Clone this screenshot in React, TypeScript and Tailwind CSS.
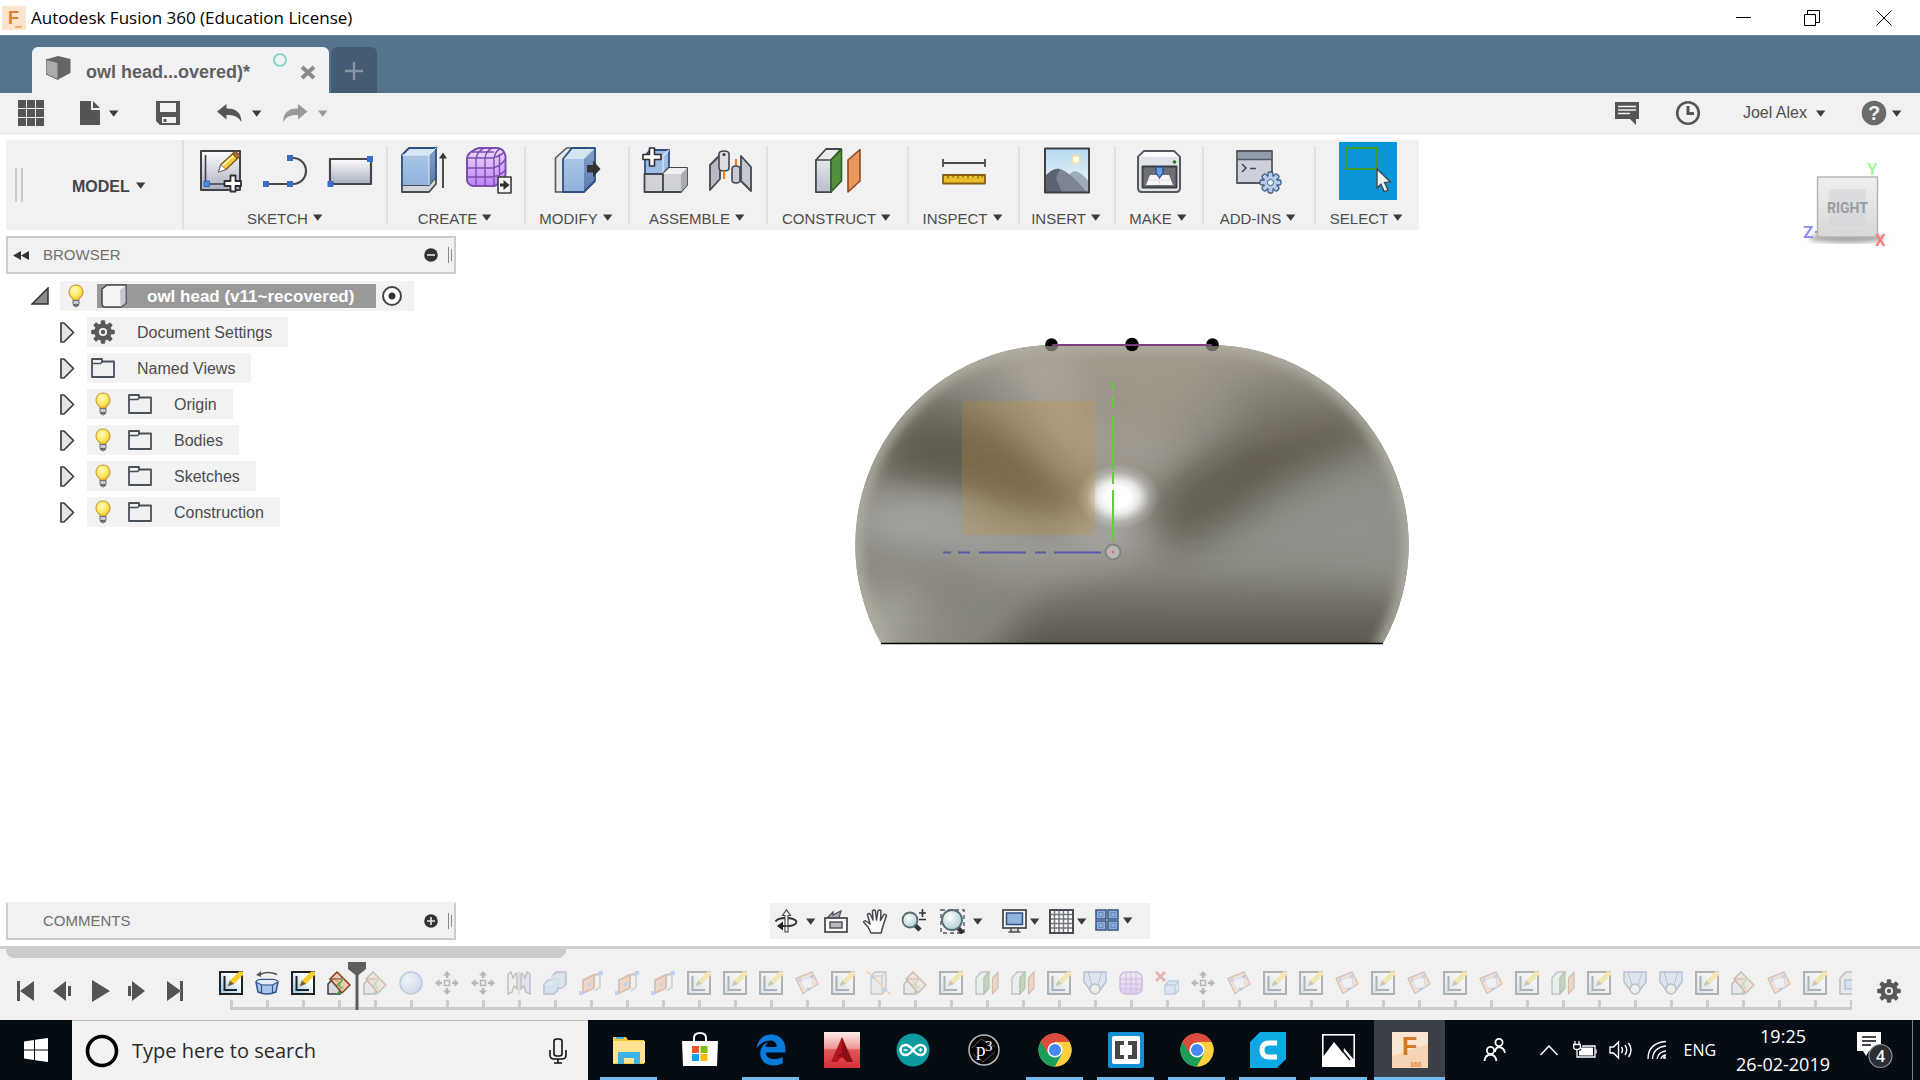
import { Fragment, useState } from 'react'
import type { ReactNode } from 'react'
import { FaEdgeLegacy } from 'react-icons/fa'

const UI_FONT = "font-['Liberation_Sans',Arial,sans-serif]"
const SYSTEM_FONT = "font-['Open_Sans','Noto_Sans',sans-serif]"

function Caret({ className = 'text-[#3c3c3c]' }: { className?: string }) {
  return (
    <svg width="10" height="7" viewBox="0 0 10 7" className={`shrink-0 ${className}`} aria-hidden="true">
      <path d="M0 0.5h9.4L4.7 6.8z" fill="currentColor" />
    </svg>
  )
}

/* ---------- shared icon parts ---------- */

function Gradients() {
  return (
    <svg width="0" height="0" className="absolute" aria-hidden="true">
      <defs>
        <linearGradient id="paper" x1="0" y1="0" x2="0" y2="1">
          <stop offset="0" stopColor="#fdfdfe" />
          <stop offset="1" stopColor="#a9afc0" />
        </linearGradient>
        <linearGradient id="steel" x1="0" y1="0" x2="0" y2="1">
          <stop offset="0" stopColor="#e4e6ea" />
          <stop offset="1" stopColor="#b9bdca" />
        </linearGradient>
        <linearGradient id="blueFace" x1="0" y1="0" x2="0" y2="1">
          <stop offset="0" stopColor="#a9c6e6" />
          <stop offset="1" stopColor="#8fb1dc" />
        </linearGradient>
        <linearGradient id="blueSide" x1="0" y1="0" x2="0" y2="1">
          <stop offset="0" stopColor="#85a5cd" />
          <stop offset="1" stopColor="#5579ab" />
        </linearGradient>
        <linearGradient id="purple" x1="0" y1="0" x2="0" y2="1">
          <stop offset="0" stopColor="#eadcf8" />
          <stop offset="1" stopColor="#bf82fa" />
        </linearGradient>
        <linearGradient id="sky" x1="0" y1="0" x2="0" y2="1">
          <stop offset="0" stopColor="#b5daf0" />
          <stop offset="1" stopColor="#f3f9fb" />
        </linearGradient>
        <linearGradient id="sketchFill" x1="1" y1="0" x2="0" y2="1">
          <stop offset="0.3" stopColor="#ffffff" />
          <stop offset="1" stopColor="#8fc6f0" />
        </linearGradient>
        <radialGradient id="ball" cx="0.38" cy="0.35" r="0.7">
          <stop offset="0" stopColor="#f4f9ff" />
          <stop offset="1" stopColor="#7ea6d8" />
        </radialGradient>
        <radialGradient id="lens" cx="0.4" cy="0.35" r="0.7">
          <stop offset="0" stopColor="#ffffff" />
          <stop offset="1" stopColor="#a9cdd2" />
        </radialGradient>
        <radialGradient id="bulb" cx="0.4" cy="0.35" r="0.7">
          <stop offset="0" stopColor="#fffbc0" />
          <stop offset="0.6" stopColor="#fbe95a" />
          <stop offset="1" stopColor="#e6b93a" />
        </radialGradient>
      </defs>
    </svg>
  )
}

function ToolIcon({ children }: { children: ReactNode }) {
  return (
    <svg width="48" height="48" viewBox="0 0 48 48" fill="none" strokeLinejoin="round" aria-hidden="true">
      {children}
    </svg>
  )
}

const GEAR_TEETH = [0, 45, 90, 135, 180, 225, 270, 315]

function Gear({ size = 24 }: { size?: number }) {
  return (
    <svg width={size} height={size} viewBox="0 0 24 24" aria-hidden="true">
      {GEAR_TEETH.map(a => (
        <rect key={a} x="9.8" y="0.2" width="4.4" height="6" rx="1" fill="#595959" transform={`rotate(${a} 12 12)`} />
      ))}
      <circle cx="12" cy="12" r="6.4" fill="none" stroke="#595959" strokeWidth="4.6" />
      <circle cx="12" cy="12" r="2.2" fill="#595959" />
    </svg>
  )
}

/* ---------- ribbon icons ---------- */

const icons = {
  sketch: (
    <ToolIcon>
      <rect x="4" y="4" width="39" height="39" fill="url(#paper)" stroke="#3f4146" strokeWidth="2" />
      <path d="M8.500 8v29H36" stroke="#3f4146" strokeWidth="1.6" />
      <rect x="7" y="34" width="5.500" height="5.500" fill="#4a90e0" stroke="#2a62b8" />
      <path d="M21.500 25l2.500-7.500L38 4.500l5 4.500-14 13.500z" fill="#f5c63a" stroke="#7b5a14" strokeWidth="1.300" />
      <path d="M24.500 19.500L38 7.500" stroke="#fff0a8" strokeWidth="1.800" />
      <path d="M35.500 7l3-2.800 4.800 4.300-3 3z" fill="#b06a3a" stroke="#6a3d1c" />
      <path d="M21.500 25l2.500-7.300 5 4.800z" fill="#fff" stroke="#777" />
      <path d="M33.500 28.500h5v5.500h5.500v5h-5.500v5.500h-5V39h-6v-5h6z" fill="#fff" stroke="#2f2f2f" strokeWidth="1.800" />
    </ToolIcon>
  ),
  line: (
    <ToolIcon>
      <path d="M4 37h27a13 13 0 0 0 0-26" stroke="#4b4b4b" strokeWidth="2.200" />
      <rect x="1" y="34" width="6" height="6" fill="#3a6cc8" />
      <rect x="25" y="34" width="6" height="6" fill="#3a6cc8" />
      <rect x="25" y="8" width="6" height="6" fill="#3a6cc8" />
    </ToolIcon>
  ),
  rect: (
    <ToolIcon>
      <rect x="3" y="12" width="41" height="25" fill="url(#paper)" stroke="#45474c" strokeWidth="2.200" />
      <rect x="0.500" y="34" width="6" height="6" fill="#3a6cc8" />
      <rect x="40" y="9" width="6" height="6" fill="#3a6cc8" />
    </ToolIcon>
  ),
  extrude: (
    <ToolIcon>
      <path d="M2 38h27l7-8v7l-7 8H2z" fill="#d2d5dc" stroke="#4a4d55" strokeWidth="1.800" />
      <path d="M2 8l7-7h27l-7 7z" fill="#d3e4f2" />
      <path d="M29 8l7-7v29l-7 8z" fill="url(#blueSide)" />
      <path d="M2 8h27v30H2z" fill="url(#blueFace)" />
      <path d="M2 38V8l7-7h27v30" stroke="#2f4f80" strokeWidth="1.800" />
      <path d="M29 8v30M2 8h27l7-7" stroke="#e6f0f8" strokeWidth="1" />
      <path d="M43 41V9" stroke="#3a3a3a" strokeWidth="1.800" />
      <path d="M43 5.500l4 6h-8z" fill="#3a3a3a" />
    </ToolIcon>
  ),
  form: (
    <ToolIcon>
      <path d="M2 12q0-4 4-7t8-4h19q6 1 7.500 8v18q-1 6-4 8t-7 4H8q-6-1-6-7z" fill="url(#purple)" stroke="#7d4db0" strokeWidth="2" />
      <path d="M2 21h26q8-2 12.500-9M2 30h26q8-2 12.500-7M3 11h24q9-2 12-6M7 5h22M11 39V11q2-7 8-10M20 39V11q1-7 7-10M29 39V12q1-8 6-10M34.500 36V7" stroke="#7d4db0" strokeWidth="1.400" />
      <rect x="33" y="30" width="13" height="16" fill="#f4f4f4" stroke="#3b3b3b" strokeWidth="1.600" />
      <path d="M35 36.500h3.500V33l6 5-6 5v-3.500H35z" fill="#2f2f2f" />
    </ToolIcon>
  ),
  modify: (
    <ToolIcon>
      <path d="M2.500 11l11-10h9l-11 10v34h-9z" fill="#e6e8eb" stroke="#55585e" strokeWidth="1.600" />
      <path d="M10 12L19 1h23L31 12z" fill="#d3e4f2" />
      <path d="M31 12L42 1v34L31 45z" fill="url(#blueSide)" />
      <path d="M10 12h21v33H10z" fill="url(#blueFace)" />
      <path d="M10 45V12L19 1h23v33L31 45z" stroke="#2f4f80" strokeWidth="1.800" />
      <path d="M34 18h6v-4.500L47.500 22 40 30v-4.500h-6z" fill="#333" />
    </ToolIcon>
  ),
  component: (
    <ToolIcon>
      <path d="M3 9l5-6h19v17l-6 7H3z" fill="#9dbde4" stroke="#2f4f80" strokeWidth="1.800" />
      <path d="M21 27V9l6-6" stroke="#dbe8f5" strokeWidth="1.200" />
      <path d="M2.500 27H21v18H2.500z" fill="#d0d2d8" stroke="#44474d" strokeWidth="1.800" />
      <path d="M21 27l6-6h18v17l-6 7H21z" fill="#d0d2d8" stroke="#44474d" strokeWidth="1.800" />
      <path d="M39 27l6-6v17l-6 7z" fill="#a8acb7" />
      <path d="M21 27l6-6h18l-6 6z" fill="#eceef0" />
      <path d="M7.500 1h5v6.500H19v5h-6.500V19h-5v-6.500H1v-5h6.500z" fill="#fff" stroke="#2f2f2f" strokeWidth="1.600" />
    </ToolIcon>
  ),
  joint: (
    <ToolIcon>
      <path d="M3 18L13 8v24L3 43z" fill="#b7bac4" stroke="#44474d" strokeWidth="1.800" />
      <path d="M12 7q0-3 5-3t5 3v14q0 3-5 3t-5-3z" fill="#dcdee3" stroke="#44474d" strokeWidth="1.600" />
      <circle cx="17" cy="7.500" r="1.600" fill="#3b3b3b" />
      <path d="M17 24v8M29 12v10" stroke="#f58220" strokeWidth="2.200" />
      <path d="M34 9l10 11v24L34 34z" fill="#c5c8d1" stroke="#44474d" strokeWidth="1.800" />
      <path d="M25 22q0-3 4-3t4 3v11q0 3-4 3t-4-3z" fill="#c9ccd4" stroke="#44474d" strokeWidth="1.600" />
    </ToolIcon>
  ),
  construct: (
    <ToolIcon>
      <path d="M2 13L12 2h15L17 13v32H2z" fill="#ececee" stroke="#44474d" strokeWidth="1.800" />
      <path d="M2 13h15v32H2z" fill="url(#steel)" stroke="#44474d" strokeWidth="1.600" />
      <path d="M17 13L27.500 2.500V34L17 45z" fill="#559040" stroke="#2f6320" strokeWidth="1.600" />
      <path d="M34 13L46 2.500V34L34 45z" fill="#eb985e" stroke="#8f4a24" strokeWidth="1.600" />
    </ToolIcon>
  ),
  inspect: (
    <ToolIcon>
      <path d="M3 12v8M45 12v8M3 16h42" stroke="#4b4b4b" strokeWidth="1.800" />
      <rect x="3" y="28" width="42" height="8.500" fill="#ecc02c" stroke="#8a5c14" strokeWidth="1.800" />
      <path d="M8 28.500v3M13 28.500v2M18 28.500v3M23 28.500v2M28 28.500v3M33 28.500v2M38 28.500v3M42 28.500v2" stroke="#6b4a10" />
    </ToolIcon>
  ),
  insert: (
    <ToolIcon>
      <rect x="2" y="1.500" width="44" height="44" fill="url(#sky)" />
      <circle cx="33" cy="12.500" r="4" fill="#fffef0" stroke="#f7dfa0" strokeWidth="2" />
      <path d="M24 30q6-8 11-5 6 3 11 10v11H30z" fill="#9eabb9" />
      <path d="M2 29q9-9 15-7 10 3 27 23.500H2z" fill="#7d8494" />
      <path d="M2 29q9-9 15-7l-4 9 6 14.500H2z" fill="#5d6373" />
      <rect x="2" y="1.500" width="44" height="44" stroke="#3d3f45" strokeWidth="2" />
    </ToolIcon>
  ),
  make: (
    <ToolIcon>
      <path d="M3 10l6-6h30l6 6v31q0 4-4 4H7q-4 0-4-4z" fill="#dfe2e6" stroke="#55585f" strokeWidth="2" />
      <path d="M4 10l5.500-5h29l5.500 5z" fill="#fafafa" />
      <circle cx="39.500" cy="15" r="1.800" fill="#1c7c1c" />
      <rect x="7.500" y="19.500" width="34" height="21" fill="#6c6f77" stroke="#3a3c42" strokeWidth="1.800" />
      <path d="M11 38l4-10h19l4 10z" fill="#f6f6f6" />
      <path d="M14 33h21M24.500 30v8" stroke="#d5d7da" strokeWidth="0.800" />
      <path d="M21 20h7v6l-3.500 5-3.500-5z" fill="#6ba0dc" stroke="#1f4f8c" strokeWidth="1.300" />
    </ToolIcon>
  ),
  addins: (
    <ToolIcon>
      <rect x="2" y="4" width="35" height="32" fill="#ccd0da" stroke="#55585f" strokeWidth="1.800" />
      <rect x="3" y="5" width="33" height="7" fill="#929cab" />
      <path d="M2 12.500h35" stroke="#55585f" strokeWidth="1.600" />
      <path d="M7 17l4 4-4 4M15 21.500h6" stroke="#45484f" strokeWidth="1.600" />
      {GEAR_TEETH.map(a => (
        <rect key={a} x="33" y="25" width="5" height="6" rx="1.500" fill="#b5cdea" stroke="#3d5a86" strokeWidth="1.300" transform={`rotate(${a} 35.500 35.500)`} />
      ))}
      <circle cx="35.500" cy="35.500" r="6.500" fill="#b5cdea" />
      <circle cx="35.500" cy="35.500" r="3" fill="#fff" stroke="#3d5a86" />
    </ToolIcon>
  ),
  select: (
    <svg width="58" height="58" viewBox="0 0 58 58" fill="none" className="bg-[#0a96d9]" aria-hidden="true">
      <rect x="7" y="6" width="31" height="21" stroke="#3f9a2c" strokeWidth="2" />
      <path d="M38 27l13.500 13-6 .6 3.600 7.400-3.800 1.800-3.400-7.600L38 46z" fill="#eef0f4" stroke="#44484f" strokeWidth="1.400" />
    </svg>
  ),
}

type Group = { label: string; width: string; tools: { name: string; icon: ReactNode }[] }

const GROUPS: Group[] = [
  {
    label: 'SKETCH',
    width: 'w-[202px]',
    tools: [
      { name: 'Create Sketch', icon: icons.sketch },
      { name: 'Line', icon: icons.line },
      { name: 'Rectangle', icon: icons.rect },
    ],
  },
  {
    label: 'CREATE',
    width: 'w-[138px]',
    tools: [
      { name: 'Extrude', icon: icons.extrude },
      { name: 'Create Form', icon: icons.form },
    ],
  },
  { label: 'MODIFY', width: 'w-[104px]', tools: [{ name: 'Press Pull', icon: icons.modify }] },
  {
    label: 'ASSEMBLE',
    width: 'w-[138px]',
    tools: [
      { name: 'New Component', icon: icons.component },
      { name: 'Joint', icon: icons.joint },
    ],
  },
  { label: 'CONSTRUCT', width: 'w-[141px]', tools: [{ name: 'Offset Plane', icon: icons.construct }] },
  { label: 'INSPECT', width: 'w-[111px]', tools: [{ name: 'Measure', icon: icons.inspect }] },
  { label: 'INSERT', width: 'w-[96px]', tools: [{ name: 'Canvas', icon: icons.insert }] },
  { label: 'MAKE', width: 'w-[88px]', tools: [{ name: '3D Print', icon: icons.make }] },
  { label: 'ADD-INS', width: 'w-[112px]', tools: [{ name: 'Scripts', icon: icons.addins }] },
  { label: 'SELECT', width: 'w-[105px]', tools: [{ name: 'Select', icon: icons.select }] },
]

/* ---------- top bars ---------- */

function TitleBar() {
  return (
    <header className={`flex h-[35px] items-center bg-white pl-[2px] text-black ${SYSTEM_FONT}`}>
      <svg width="24" height="24" viewBox="0 0 24 24" aria-hidden="true">
        <rect width="24" height="24" fill="#fbe3cd" />
        <text x="6" y="18" fontSize="18" fontWeight="700" fill="#d9812e" fontFamily="Liberation Sans">F</text>
        <rect x="13" y="20" width="7" height="2" fill="#f0b070" />
      </svg>
      <h1 className="ml-[5px] pt-px text-[17px] leading-6">Autodesk Fusion 360 (Education License)</h1>
      <div className="ml-auto flex">
        <button aria-label="Minimize" className="grid h-[35px] w-[68px] place-items-center">
          <svg width="15" height="15" viewBox="0 0 15 15"><path d="M0 7.500h15" stroke="#000" /></svg>
        </button>
        <button aria-label="Restore" className="grid h-[35px] w-[70px] place-items-center">
          <svg width="16" height="16" viewBox="0 0 16 16" fill="none" stroke="#000">
            <path d="M.5 4.500h11v11H.5zM3.500 4V.5h12v12H12" />
          </svg>
        </button>
        <button aria-label="Close" className="grid h-[35px] w-[73px] place-items-center">
          <svg width="16" height="16" viewBox="0 0 16 16" stroke="#000"><path d="M.5.5l15 15M15.500.5l-15 15" /></svg>
        </button>
      </div>
    </header>
  )
}

function TabBar() {
  return (
    <nav className="flex h-[58px] items-end gap-[2px] border-t border-t-[#6b859c] bg-[#56738e] pl-8">
      <div className="flex h-[46px] w-[297px] items-center rounded-t-md bg-[#f2f2f5] pl-[14px]">
        <svg width="25" height="24" viewBox="0 0 25 24" className="-mt-1" aria-hidden="true">
          <path d="M0 3.500L12 0l12.500 3v14L12 23.500 0 18z" fill="#666" />
          <path d="M0 3.500l12 3v17L0 18z" fill="#a9acad" stroke="#666" />
        </svg>
        <a href="#document" className="ml-[15px] pt-1 text-[18px] font-bold text-[#606060]">owl head...overed)*</a>
        <svg width="16" height="16" viewBox="0 0 16 16" className="mb-5 ml-auto" aria-hidden="true">
          <circle cx="8" cy="8" r="6" fill="none" stroke="#8fd6c4" strokeWidth="2.200" />
        </svg>
        <button aria-label="Close tab" className="mr-[13px] ml-3 pt-1">
          <svg width="16" height="15" viewBox="0 0 16 15"><path d="M2 2l12 11M14 2L2 13" stroke="#8b8b8b" strokeWidth="4" /></svg>
        </button>
      </div>
      <button aria-label="New tab" className="grid h-[46px] w-[46px] place-items-center rounded-t-md bg-[#455b72] pt-[2px]">
        <svg width="18" height="18" viewBox="0 0 18 18"><path d="M9 0v18M0 9h18" stroke="#8595a5" strokeWidth="2.400" /></svg>
      </button>
    </nav>
  )
}

function QuickBar() {
  return (
    <div className="flex h-[41px] items-center border-b border-[#e8e8e8] bg-[#f1f1f1] pr-[18px] pl-[18px] text-[#555]">
      <button aria-label="Data panel">
        <svg width="26" height="26" viewBox="0 0 26 26" fill="currentColor">
          {[0, 9, 18].map(y => [0, 9, 18].map(x => <rect key={`${x}-${y}`} x={x} y={y} width="8" height="8" />))}
        </svg>
      </button>
      <button aria-label="File" className="ml-9 flex items-center gap-[9px]">
        <svg width="20" height="24" viewBox="0 0 20 24" fill="currentColor"><path d="M0 0h11v9h9v15H0z" /><path d="M13 0l7 7h-7z" /></svg>
        <Caret />
      </button>
      <button aria-label="Save" className="ml-9">
        <svg width="26" height="24" viewBox="0 0 26 24">
          <path d="M1 0h24v24H5l-4-4z" fill="currentColor" />
          <path d="M5 2h16v9H5zM7 16h14v6H7z" fill="#f1f1f1" />
          <rect x="8.500" y="18" width="3" height="3" fill="currentColor" />
        </svg>
      </button>
      <button aria-label="Undo" className="ml-9 flex items-center gap-[10px]">
        <svg width="25" height="18" viewBox="0 0 25 18"><path d="M0 7.500L9.500 0v4.500Q24 4 24.500 18 20 10 9.500 11v4.500z" fill="currentColor" /></svg>
        <Caret />
      </button>
      <button aria-label="Redo" className="ml-[21px] flex items-center gap-[10px] text-[#999]" disabled>
        <svg width="25" height="18" viewBox="0 0 25 18"><path d="M24.500 7.500L15 0v4.500Q.5 4 0 18 4.500 10 15 11v4.500z" fill="currentColor" /></svg>
        <Caret className="text-[#999]" />
      </button>
      <div className="ml-auto flex items-center">
        <button aria-label="Comments">
          <svg width="24" height="23" viewBox="0 0 24 23"><path d="M0 0h24v17h-3v6l-6-6H0z" fill="currentColor" /><path d="M3 4.500h18M3 8h18M3 11.500h12" stroke="#f1f1f1" strokeWidth="1.500" /></svg>
        </button>
        <button aria-label="Job status" className="ml-9">
          <svg width="26" height="26" viewBox="0 0 26 26" fill="none"><circle cx="13" cy="13" r="10.800" stroke="currentColor" strokeWidth="2.600" /><path d="M13 6v7.500h6" stroke="currentColor" strokeWidth="3" /></svg>
        </button>
        <button className="ml-[42px] flex items-center gap-[9px] text-[16px] text-[#4e4e4e]">
          Joel Alex
          <Caret />
        </button>
        <button aria-label="Help" className="ml-[35px] flex items-center gap-[5px]">
          <svg width="26" height="26" viewBox="0 0 26 26">
            <circle cx="13" cy="13" r="12.300" fill="#6b6b6b" />
            <text x="13" y="20" textAnchor="middle" fontSize="20" fontWeight="700" fill="#f1f1f1" fontFamily="Liberation Sans">?</text>
          </svg>
          <Caret />
        </button>
      </div>
    </div>
  )
}

function Ribbon() {
  return (
    <div className="relative mt-[6px] ml-[6px] flex h-[90px] w-fit bg-[#f1f1f1]" role="toolbar" aria-label="Model tools">
      <div className="flex w-[178px] items-center border-r-2 border-[#e0e0e0] pl-[9px]">
        <span className="h-[34px] w-2 border-x-2 border-[#c9c9c9]" />
        <button className="ml-[49px] flex items-center gap-[6px] pt-1 text-[16px] font-bold text-[#444]">
          MODEL
          <Caret className="mb-[3px] text-[#3c3c3c]" />
        </button>
      </div>
      {GROUPS.map((g, i) => (
        <Fragment key={g.label}>
          {i > 0 && <span className="-mr-[2px] my-[6px] w-[2px] bg-[#e0e0e0]" />}
          <div className={`flex flex-col items-center pt-[3px] ${g.width}`}>
            <div className="flex h-[58px] items-center gap-[17px] pb-[2px] pl-[2px]">
              {g.tools.map(t => (
                <button key={t.name} aria-label={t.name}>{t.icon}</button>
              ))}
            </div>
            <button className="mt-2 flex items-center gap-[5px] text-[15px] leading-5 whitespace-nowrap text-[#4c4c4c]">
              {g.label}
              <Caret className="mb-[3px] text-[#3c3c3c]" />
            </button>
          </div>
        </Fragment>
      ))}
    </div>
  )
}

/* ---------- browser tree ---------- */

type PanelBarProps = { title: string; open: boolean; onToggle: () => void; docked?: boolean }

function PanelBar({ title, open, onToggle, docked }: PanelBarProps) {
  return (
    <div className={`flex h-[38px] w-[450px] items-center border-2 border-[#cccccc] bg-[#f1f1f1] pr-[2px] pl-[5px] ${docked ? 'border-t-[#f1f1f1]' : ''}`}>
      <span className="w-[30px]">
        {!docked && (
          <svg width="16" height="9" viewBox="0 0 16 9" aria-hidden="true"><path d="M8 0v9L0 4.500zM16 0v9L8 4.500z" fill="#333" /></svg>
        )}
      </span>
      <h2 className="text-[15px] text-[#707070]">{title}</h2>
      <button aria-label={`Toggle ${title}`} onClick={onToggle} className="ml-auto">
        <svg width="14" height="14" viewBox="0 0 14 14">
          <circle cx="7" cy="7" r="6.800" fill="#333" />
          <path d={open ? 'M3 7h8' : 'M3 7h8M7 3v8'} stroke="#e8e8e8" strokeWidth="1.600" />
        </svg>
      </button>
      <span className="ml-[10px] flex items-center gap-[2px]">
        <span className="h-4 w-px bg-[#888]" />
        <span className="h-3 w-px bg-[#888]" />
      </span>
    </div>
  )
}

function Bulb() {
  return (
    <svg width="16" height="24" viewBox="0 0 16 24" aria-hidden="true">
      <path d="M8 1a7 7 0 0 1 4.800 12Q11 14.500 11 16H5q0-1.500-1.800-3A7 7 0 0 1 8 1z" fill="url(#bulb)" stroke="#caa13a" strokeWidth="1.200" />
      <path d="M5 16.500h6v3.500q-1 3-3 3t-3-3z" fill="#c9ccd4" stroke="#6d7078" strokeWidth="1" />
      <path d="M5.500 21h5" stroke="#4b4d53" strokeWidth="1.500" />
    </svg>
  )
}

function Folder() {
  return (
    <svg width="24" height="20" viewBox="0 0 24 20" fill="none" aria-hidden="true">
      <path d="M1 1h10v2.500h12V19H1z" fill="#eff0f2" stroke="#4a505a" strokeWidth="1.800" strokeLinejoin="round" />
      <path d="M1 5.500h8.500L12 3.500" stroke="#4a505a" strokeWidth="1.600" />
    </svg>
  )
}

function Expander() {
  return (
    <svg width="15" height="21" viewBox="0 0 15 21" aria-hidden="true">
      <path d="M1 1h3l9.500 9.500L4 20H1z" fill="#e3e4e8" stroke="#3f3f3f" strokeWidth="1.700" strokeLinejoin="round" />
    </svg>
  )
}

const NODES = [
  { label: 'Document Settings', kind: 'settings' },
  { label: 'Named Views', kind: 'views' },
  { label: 'Origin', kind: 'folder' },
  { label: 'Bodies', kind: 'folder' },
  { label: 'Sketches', kind: 'folder' },
  { label: 'Construction', kind: 'folder' },
]

function BrowserTree() {
  return (
    <ul className="mt-[7px] flex flex-col gap-[6px] text-[16px] text-[#4c4c4c]">
      <li className="flex h-[30px] items-center pl-[31px]">
        <button aria-label="Collapse root" className="w-[29px]">
          <svg width="18" height="18" viewBox="0 0 18 18"><path d="M17 1v16H1z" fill="#8a8a8a" stroke="#333" strokeWidth="1.500" /></svg>
        </button>
        <div className="flex h-[30px] w-[354px] items-center bg-[#f2f2f2] pl-2">
          <button aria-label="Hide component"><Bulb /></button>
          <div className="ml-[13px] flex h-6 w-[279px] items-center bg-[#999] pl-1">
            <svg width="26" height="24" viewBox="0 0 26 24" aria-hidden="true">
              <path d="M1 5l5-4h19v18l-5 4H3l-2-2z" fill="#f4f4f5" stroke="#4a4a4a" strokeWidth="1.600" />
              <path d="M19 6l5.500-4.500V19L19.500 23z" fill="#c3c6cf" />
            </svg>
            <span className="ml-5 pt-px text-[17px] font-bold whitespace-nowrap text-white">owl head (v11~recovered)</span>
          </div>
          <input type="radio" name="active-component" aria-label="Activate component" defaultChecked className="ml-[6px] size-5 appearance-none rounded-full border-2 border-[#444] bg-[radial-gradient(circle,#333_0_3px,#fff_4px)]" />
        </div>
      </li>
      {NODES.map(n => (
        <li key={n.label} className="flex h-[30px] items-center pl-[60px]">
          <button aria-label={`Expand ${n.label}`} className="w-[27px]"><Expander /></button>
          <div className="flex h-[30px] items-center bg-[#f2f2f2] pr-4 pl-1">
            {n.kind === 'folder' && (
              <button aria-label={`Hide ${n.label}`} className="mr-[17px] pl-1"><Bulb /></button>
            )}
            {n.kind === 'settings' ? <Gear /> : <Folder />}
            <span className="ml-[22px] pt-px">{n.label}</span>
          </div>
        </li>
      ))}
    </ul>
  )
}

/* ---------- 3D viewport ---------- */

const BODY = 'M881 643A200 200 0 0 1 1057 345H1208A200 200 0 0 1 1383 643Z'
const RIM = 'M870 670L881 643A200 200 0 0 1 1057 345H1208A200 200 0 0 1 1383 643L1394 670'

function Canvas() {
  return (
    <svg viewBox="0 134 1920 812" className="absolute inset-0 h-full w-full" aria-label="Model view">
      <defs>
        <clipPath id="body"><path d={BODY} /></clipPath>
        <filter id="soft" x="-60%" y="-60%" width="220%" height="220%"><feGaussianBlur stdDeviation="21" /></filter>
        <filter id="mid" x="-60%" y="-60%" width="220%" height="220%"><feGaussianBlur stdDeviation="16" /></filter>
        <filter id="rim" x="-10%" y="-10%" width="120%" height="120%"><feGaussianBlur stdDeviation="6" /></filter>
        <radialGradient id="spot">
          <stop offset="0.3" stopColor="#fff" />
          <stop offset="0.5" stopColor="#fff" stopOpacity="0.800" />
          <stop offset="0.75" stopColor="#fff" stopOpacity="0.250" />
          <stop offset="1" stopColor="#fff" stopOpacity="0" />
        </radialGradient>
        <linearGradient id="floor" x1="0" y1="0" x2="0" y2="1">
          <stop offset="0" stopColor="#5a5750" stopOpacity="0" />
          <stop offset="0.45" stopColor="#57534c" stopOpacity="0.800" />
          <stop offset="1" stopColor="#4c4841" />
        </linearGradient>
      </defs>
      <g clipPath="url(#body)">
        <rect x="850" y="340" width="565" height="310" fill="#8b8880" />
        <g filter="url(#soft)">
          <ellipse cx="1130" cy="350" rx="190" ry="22" fill="#aaa496" />
          <path d="M985 350L1060 350 1110 480 1080 480z" fill="#aba59b" />
          <path d="M1080 350L1250 350 1150 480 1105 480z" fill="#9e978a" />
          <path d="M870 440L930 400 1000 430 1090 500 1060 520 980 500 880 480z" fill="#5f5b50" />
          <path d="M1340 400L1390 435 1290 480 1180 550 1150 510 1230 445z" fill="#5d584c" />
          <path d="M1250 365L1360 410 1240 440z" fill="#817c71" />
          <path d="M860 500L960 515 1100 545 1060 565 860 540z" fill="#a9a9a5" />
          <ellipse cx="910" cy="562" rx="70" ry="12" fill="#7c7972" />
          <path d="M1180 570L1320 480 1420 460 1420 590 1180 580z" fill="#8d9189" />
          <path d="M860 590L920 590 890 680 850 670z" fill="#a8a99f" />
          <path d="M920 600L1040 580 980 640z" fill="#84847d" />
        </g>
        <g filter="url(#mid)">
          <ellipse cx="930" cy="514" rx="50" ry="12" fill="#a5a5a1" />
          <ellipse cx="1105" cy="536" rx="42" ry="20" fill="#aaa9a5" />
          <ellipse cx="1140" cy="450" rx="34" ry="12" fill="#a19e99" />
          <ellipse cx="1205" cy="490" rx="34" ry="14" fill="#68635a" />
          <path d="M950 700L1040 600Q1140 560 1250 568T1430 600V700z" fill="url(#floor)" />
        </g>
        <path d={RIM} fill="none" stroke="#b3afa2" strokeWidth="12" filter="url(#rim)" />
        <ellipse cx="1118" cy="497" rx="42" ry="33" fill="url(#spot)" />
      </g>
      <rect x="962" y="401" width="133" height="134" fill="#c9952f" fillOpacity="0.230" />
      <path d="M881 643.500H1383" stroke="#000" strokeWidth="1.400" />
      <g fill="#000">
        <circle cx="1051.500" cy="344.500" r="6.300" />
        <circle cx="1132" cy="344.500" r="6.800" />
        <circle cx="1212.500" cy="344.500" r="6.300" />
      </g>
      <path d="M1045 346h13q-1 5-6.500 5t-6.500-5zM1206 346h13q-1 5-6.500 5t-6.500-5z" fill="#6b6860" />
      <path d="M1052 345H1212" stroke="#7a3f7c" strokeWidth="1.800" />
      <path d="M1113 381V541" stroke="#6fc548" strokeWidth="2" strokeDasharray="9 6 12 8 54 2 12 6 51 0" />
      <path d="M943 552.500H1101" stroke="#5c58a8" strokeWidth="2" strokeDasharray="8 7 12 9 47 9 11 8 60 0" />
      <circle cx="1113" cy="552" r="7.500" fill="#b9b7b3" stroke="#85837e" strokeWidth="2" />
      <circle cx="1113" cy="552" r="1.200" fill="#d66" />
    </svg>
  )
}

function ViewCube() {
  return (
    <div className="absolute top-[24px] right-[30px]">
      <svg width="90" height="92" viewBox="0 0 90 92" role="img" aria-label="View cube">
        <defs>
          <filter id="shade"><feGaussianBlur stdDeviation="2.500" /></filter>
          <linearGradient id="face" x1="0" y1="0" x2="0" y2="1">
            <stop offset="0" stopColor="#f0f0f0" />
            <stop offset="1" stopColor="#d8d8d8" />
          </linearGradient>
        </defs>
        <ellipse cx="47" cy="80" rx="38" ry="5" fill="#8d8d8d" opacity="0.800" filter="url(#shade)" />
        <g fontFamily="Roboto" fontWeight="600" fontSize="17">
          <text x="67" y="17" fill="#9cf79c">Y</text>
          <text x="3" y="80" fill="#8c8cff">Z</text>
          <rect x="17.500" y="19" width="60" height="60" fill="url(#face)" stroke="#b3b3b3" strokeWidth="1.400" />
          <rect x="29" y="31" width="37" height="37" fill="#d3d6da" opacity="0.600" />
          <text x="75" y="88" fill="#f77b7b">X</text>
          <path d="M15 74h2" stroke="#8c8cff" strokeWidth="2" />
        </g>
        <text x="47.500" y="55" textAnchor="middle" fontFamily="Roboto" fontWeight="700" fontSize="14" fill="#9a9da1">RIGHT</text>
      </svg>
    </div>
  )
}

function NavBar() {
  const s = '#4a4d53'
  return (
    <div className="flex h-9 w-[380px] items-center bg-[#f1f1f1] pl-1" role="toolbar" aria-label="Navigation">
      <button aria-label="Orbit" className="flex items-center gap-2">
        <svg width="24" height="24" viewBox="0 0 24 24" fill="none">
          <path d="M1.500 12.500q2-3.500 10.500-3.500t10.500 3.500q0 3.500-7 4.500H6" stroke="#333" strokeWidth="1.800" />
          <path d="M11 23V6.500H8.500L12.500.8l4 5.700H14V23z" fill="#fff" stroke={s} strokeWidth="1.200" />
          <path d="M9 12.500v9L3 17z" fill="#222" />
          <path d="M9 17h6.500" stroke="#333" strokeWidth="1.600" />
        </svg>
        <Caret />
      </button>
      <button aria-label="Look at" className="ml-2">
        <svg width="24" height="24" viewBox="0 0 24 24" fill="none">
          <path d="M3 9l6-6v3l8-4-2 7z" fill="#a9adb5" stroke={s} strokeWidth="1.200" />
          <rect x="1" y="9" width="22" height="14" fill="#fafafa" stroke={s} strokeWidth="1.800" />
          <rect x="6" y="13" width="12" height="6" fill="#b7babf" stroke={s} strokeWidth="1.400" />
        </svg>
      </button>
      <button aria-label="Pan" className="ml-[15px]">
        <svg width="25" height="25" viewBox="0 0 25 25">
          <path d="M8 24l-3-6-4.500-5q1-2 3-.5L7 15 4.500 5.500q1.500-2 3 0L10 11 9.500 2q1.500-2 3 0l1 9 1.500-9q2-2 3 0l-.5 9.500L20.500 6q2-1.500 3 .5L20 17l-2 7z" fill="#fafafa" stroke="#44474d" strokeWidth="1.500" strokeLinejoin="round" />
        </svg>
      </button>
      <button aria-label="Zoom" className="ml-[13px]">
        <svg width="26" height="24" viewBox="0 0 26 24" fill="none">
          <path d="M13 15l6 6" stroke="#333" strokeWidth="4.500" />
          <circle cx="9" cy="11" r="7.500" fill="url(#lens)" stroke="#5a6a70" strokeWidth="1.800" />
          <path d="M21.500 0v8M18 4h7M18 10.500h7" stroke="#333" strokeWidth="1.600" />
        </svg>
      </button>
      <button aria-label="Fit" className="ml-[13px] flex items-center gap-2">
        <svg width="25" height="25" viewBox="0 0 25 25" fill="none">
          <path d="M1 1h23v23H1z" stroke="#555" strokeWidth="1.400" strokeDasharray="4 3" />
          <path d="M16 17l7 7" stroke="#333" strokeWidth="4.500" />
          <circle cx="12" cy="11" r="10" fill="url(#lens)" stroke="#5a6a70" strokeWidth="1.800" />
        </svg>
        <Caret />
      </button>
      <button aria-label="Display settings" className="ml-[19px] flex items-center gap-[3px]">
        <svg width="25" height="25" viewBox="0 0 25 25" fill="none">
          <rect x="1" y="1" width="23" height="18" fill="#f4f4f4" stroke={s} strokeWidth="1.800" />
          <rect x="4.500" y="4" width="16" height="11.500" fill="#8fb4e0" stroke="#2f4f80" strokeWidth="1.500" />
          <path d="M9 19h7v4h2.500H6.500H9z" fill="#ddd" stroke={s} strokeWidth="1.500" />
        </svg>
        <Caret />
      </button>
      <button aria-label="Grid and snaps" className="ml-[9px] flex items-center gap-[3px]">
        <svg width="25" height="25" viewBox="0 0 25 25" fill="none">
          <rect x="1" y="1" width="23" height="23" fill="#fff" />
          <path d="M5.500 1v23M10 1v23M14.500 1v23M19 1v23M1 5.500h23M1 10h23M1 14.500h23M1 19h23" stroke="#72757c" strokeWidth="1.500" />
          <rect x="1" y="1" width="23" height="23" stroke={s} strokeWidth="2" />
        </svg>
        <Caret />
      </button>
      <button aria-label="Viewports" className="ml-2 flex items-center gap-1 pb-[2px]">
        <svg width="24" height="22" viewBox="0 0 24 22" fill="#8fb0de" stroke="#3d5a86" strokeWidth="1.600">
          {[1, 13].map(x => [1, 12].map(y => (
            <g key={`${x}-${y}`}>
              <rect x={x} y={y} width="10" height="9" />
              <rect x={x + 3} y={y + 2.500} width="4" height="4" fill="none" stroke="#6788b5" strokeWidth="1" />
            </g>
          )))}
        </svg>
        <Caret />
      </button>
    </div>
  )
}

/* ---------- timeline ---------- */

const s24 = { width: 24, height: 24, viewBox: '0 0 24 24', fill: 'none' } as const

const features: Record<string, ReactNode> = {
  sketch: (
    <svg {...s24}>
      <rect x="1" y="1" width="22" height="22" fill="url(#sketchFill)" stroke="#1f2225" strokeWidth="2" />
      <path d="M5.500 5v14H18" stroke="#1f2225" strokeWidth="2" />
      <path d="M8.500 15.500l2.500-6L20 .5h4V4l-9 9z" fill="#f7cf2b" />
      <path d="M8.500 15.500l2.500-6 4 3.500z" fill="#7d6040" />
    </svg>
  ),
  revolve: (
    <svg {...s24}>
      <path d="M5 3.500q8-4 17 0" stroke="#555" strokeWidth="1.600" />
      <path d="M1 4l5-4v6z" fill="#555" />
      <path d="M1 11q1-2 5-2.500h12q4 .5 5 2.500l-2 10q-9 4-18 0z" fill="#a9c5e8" stroke="#35568a" strokeWidth="1.500" />
      <path d="M1.500 11q1-1.800 5-2h11q4 .2 5 2l-5 2.500h-11z" fill="#e2edf8" />
      <path d="M1 11l5.500 3h11L23 11M6.500 14v8.500M17.500 14v8.500" stroke="#35568a" strokeWidth="1.200" />
    </svg>
  ),
  angle: (
    <svg {...s24}>
      <path d="M1 13l6-6 6 6v10H1z" fill="#d7d9de" stroke="#3a3c40" strokeWidth="1.500" />
      <path d="M9 23L17 14v3l-5 6z" fill="#4a9a3a" />
      <path d="M3 8l7-7 13 13-8 8z" fill="#f3c3a2" fillOpacity="0.800" stroke="#7d3f20" strokeWidth="1.500" />
      <path d="M3.500 8h13L9 15z" stroke="#7d3f20" />
      <path d="M17 7l-6 7 4 3" stroke="#55b544" strokeWidth="1.500" />
    </svg>
  ),
  sphere: <svg {...s24}><circle cx="12" cy="12" r="11" fill="url(#ball)" stroke="#4c72a8" strokeWidth="1.500" /></svg>,
  move: (
    <svg {...s24}>
      <rect x="9.500" y="9.500" width="5" height="5" stroke="#333" strokeWidth="1.500" />
      <path d="M12 0l4 4.500H8zM12 24l4-4.500H8zM0 12l4.500-4v8zM24 12l-4.500-4v8z" fill="#333" />
      <path d="M12 4v3M12 17v3M4 12h3M17 12h3" stroke="#333" strokeWidth="2.500" />
    </svg>
  ),
  mirror: (
    <svg {...s24}>
      <path d="M1 3l3-2 2 6 3-5 1 1v15l-3-3-2 6-4 2z" fill="#e9ebee" stroke="#3b3e44" strokeWidth="1.300" />
      <path d="M23 3l-3-2-2 6-3-5-1 1v15l3-3 2 6 4 2z" fill="#b3cbea" stroke="#3b3e44" strokeWidth="1.300" />
      <path d="M12 0v24" stroke="#777" />
    </svg>
  ),
  combine: (
    <svg {...s24}>
      <path d="M1 13l4-4h4V5l4-4h10v12l-4 4h-4v2l-4 4H1z" fill="#9dbde4" stroke="#35568a" strokeWidth="1.500" />
      <path d="M1 13h8V5h10v12M19 5l4-4M9 13l-4-4" stroke="#d7e5f4" strokeWidth="1" />
    </svg>
  ),
  path: (
    <svg {...s24}>
      <path d="M11 5l10-3v14l-5 4" stroke="#777a80" strokeWidth="1.500" />
      <path d="M4 9l11-5v13L4 22z" fill="#f09a66" stroke="#9a4f26" strokeWidth="1.800" />
      <path d="M1 22h4M15 4h6" stroke="#555" />
      <rect x="0" y="20" width="4" height="4" fill="#4b8df0" />
      <rect x="20" y="0" width="4" height="4" fill="#4b8df0" />
      <rect x="9" y="12" width="3" height="3" fill="#4b8df0" />
    </svg>
  ),
  points: (
    <svg {...s24}>
      <path d="M1 7.500L17 1l6 12-15 9.500z" fill="#f5c09c" stroke="#9a5a3a" strokeWidth="1.400" />
      <path d="M5 9l12-3 1 10-9 2z" fill="#eceef1" stroke="#a5a8ae" />
      <path d="M3.500 7.500h3v3h-3zM15 4h3v3h-3zM12 17h3v3h-3z" fill="#4b7fe0" />
    </svg>
  ),
  axis: (
    <svg {...s24}>
      <path d="M4 5l4-4h11v18l-4 4H4z" fill="#dcdee3" stroke="#63666d" strokeWidth="1.300" />
      <path d="M4 5h11v18M15 5l4-4" stroke="#63666d" />
      <path d="M0 0l24 24" stroke="#f08a35" strokeWidth="1.800" />
      <rect x="4" y="5" width="3" height="3" fill="#4b7fe0" />
      <rect x="16" y="17" width="3" height="3" fill="#4b7fe0" />
    </svg>
  ),
  offset: (
    <svg {...s24}>
      <path d="M1 7l5-6h8L9 7v16H1z" fill="#e3e5e9" stroke="#55585f" strokeWidth="1.400" />
      <path d="M9 7l5-6v16l-5 6z" fill="#5c9a48" stroke="#2f6320" strokeWidth="1.200" />
      <path d="M17.500 7l5.500-6v16l-5.500 6z" fill="#eb985e" stroke="#8f4a24" strokeWidth="1.200" />
    </svg>
  ),
  loft: (
    <svg {...s24}>
      <path d="M1 1h22v10l-7 9H8L1 11z" fill="#b5cbe8" stroke="#35568a" strokeWidth="1.500" />
      <path d="M5 1l4 13M19 1l-4 13" stroke="#35568a" />
      <circle cx="12" cy="18" r="5" fill="#e8eaed" stroke="#44474d" strokeWidth="1.400" />
    </svg>
  ),
  form: (
    <svg {...s24}>
      <rect x="1" y="1" width="22" height="22" rx="6" fill="url(#purple)" stroke="#7d4db0" strokeWidth="1.500" />
      <path d="M1 8h22M1 13h22M1 18h22M7 1v22M12 1v22M17 1v22" stroke="#7d4db0" />
    </svg>
  ),
  remove: (
    <svg {...s24}>
      <path d="M1 1l9 9M10 1l-9 9" stroke="#d22f2f" strokeWidth="3" />
      <path d="M10 14l4-4h10v9l-4 4H10z" fill="#b5cbe8" stroke="#3f7fb5" strokeWidth="1.500" />
      <path d="M10 14h10v9M20 14l4-4" stroke="#3f7fb5" strokeWidth="1.300" />
    </svg>
  ),
  shell: (
    <svg {...s24}>
      <path d="M1 7l6-6h17v22H1z" fill="#d7d9de" stroke="#44474d" strokeWidth="1.500" />
      <path d="M6 9h18v9H6z" fill="#9dbde4" stroke="#35568a" strokeWidth="1.500" />
    </svg>
  ),
}

const TIMELINE = [
  'sketch', 'revolve', 'sketch', 'angle', 'angle', 'sphere', 'move', 'move', 'mirror', 'combine',
  'path', 'path', 'path', 'sketch', 'sketch', 'sketch', 'points', 'sketch', 'axis', 'angle',
  'sketch', 'offset', 'offset', 'sketch', 'loft', 'form', 'remove', 'move', 'points', 'sketch',
  'sketch', 'points', 'sketch', 'points', 'sketch', 'points', 'sketch', 'offset', 'sketch', 'loft',
  'loft', 'sketch', 'angle', 'points', 'sketch', 'shell',
]

const PLAYBACK = [
  { name: 'Go to start', d: 'M3 1h3v20H3zM20 1v20L6 11z' },
  { name: 'Step back', d: 'M15 1v20L2 11zM17 6h3v10h-3z' },
  { name: 'Play', d: 'M4 0l18 11L4 22z' },
  { name: 'Step forward', d: 'M7 1v20l13-10zM3 6h3v10H3z' },
  { name: 'Go to end', d: 'M5 1v20l14-10zM18 1h3v20h-3z' },
]

function Timeline() {
  const [marker] = useState(4)
  return (
    <section className="border-t-[3px] border-[#cfcfcf] bg-[#f1f1f1]" aria-label="Timeline">
      <div className="ml-[6px] h-[9px] w-7/24 rounded-b-lg bg-[#cbcbcb]" />
      <div className="flex h-[62px]">
        <div className="flex w-[213px] shrink-0 gap-[13px] pt-[21px] pl-[14px] text-[#545454]">
          {PLAYBACK.map(p => (
            <button key={p.name} aria-label={p.name} className="size-6">
              <svg width="24" height="22" viewBox="0 0 24 22"><path d={p.d} fill="currentColor" /></svg>
            </button>
          ))}
        </div>
        <div className="min-w-0 flex-1 overflow-hidden">
          <ol className="relative flex h-[52px] w-full">
            {TIMELINE.map((f, i) => (
              <li key={i} className="relative flex w-9 shrink-0 flex-col items-center pt-[13px]">
                <span className={i < marker ? '' : 'opacity-30'}>{features[f]}</span>
                <span className="mt-[5px] h-[7px] w-[3px] bg-[#cbcbcb]" />
                <span className={i === 0 ? 'h-[3px] w-[19px] self-end bg-[#cbcbcb]' : 'h-[3px] w-full bg-[#cbcbcb]'} />
                {i === marker && (
                  <svg width="18" height="48" viewBox="0 0 18 48" className="absolute top-[4px] -left-[9px]" aria-label="Timeline marker">
                    <path d="M0 0h18v7l-7.500 6V48h-3V13L0 7z" fill="#5e5e5e" />
                  </svg>
                )}
              </li>
            ))}
          </ol>
        </div>
        <button aria-label="Timeline settings" className="h-[62px] w-[68px] shrink-0 pt-[3px] pl-[25px]"><Gear /></button>
      </div>
    </section>
  )
}

/* ---------- Windows taskbar ---------- */

function Chrome() {
  return (
    <svg width="34" height="34" viewBox="0 0 34 34">
      <circle cx="17" cy="17" r="16.500" fill="#fdd03f" />
      <path d="M17 17L2.700 8.700A16.500 16.500 0 0 1 31.300 8.700H17z" fill="#dd4b3e" />
      <path d="M17 17L2.700 8.700A16.500 16.500 0 0 0 17 33.500L24 21z" fill="#1a9f5a" />
      <path d="M17 33.500A16.500 16.500 0 0 0 31.300 8.700H17l7.500 12z" fill="#fdd03f" />
      <path d="M2.700 8.700A16.500 16.500 0 0 1 31.300 8.700H17L10 21z" fill="#dd4b3e" />
      <circle cx="17" cy="17" r="7.600" fill="#fff" />
      <circle cx="17" cy="17" r="6" fill="#4587f3" />
    </svg>
  )
}

const APPS: { name: string; open?: boolean; active?: boolean; icon: ReactNode }[] = [
  {
    name: 'File Explorer',
    open: true,
    icon: (
      <svg width="34" height="28" viewBox="0 0 34 28">
        <path d="M1 1h13l2 3h16v24H1z" fill="#f7c93a" />
        <path d="M4 2h8" stroke="#3fb0e8" strokeWidth="2" />
        <path d="M1 5h32v22H1z" fill="#ffe392" />
        <path d="M6 28V16h22v12h-6v-6H12v6z" fill="#3bb4ea" />
      </svg>
    ),
  },
  {
    name: 'Microsoft Store',
    icon: (
      <svg width="36" height="34" viewBox="0 0 36 34" className="mb-[2px]">
        <path d="M12 9V6q0-5 6-5t6 5v3" fill="none" stroke="#fff" strokeWidth="2" />
        <path d="M0 9h36l-1 25H1z" fill="#fff" />
        <path d="M10 14h7v7h-7z" fill="#f35325" /><path d="M18.500 14h7v7h-7z" fill="#81bc06" />
        <path d="M10 22h7v7h-7z" fill="#05a6f0" /><path d="M18.500 22h7v7h-7z" fill="#ffba08" />
      </svg>
    ),
  },
  { name: 'Edge', open: true, icon: <FaEdgeLegacy className="size-[32px] text-[#0a7bdc]" /> },
  {
    name: 'AutoCAD',
    icon: (
      <svg width="36" height="36" viewBox="0 0 36 36">
        <defs>
          <linearGradient id="acad" x1="0" y1="0" x2="0" y2="1"><stop offset="0" stopColor="#fbeceb" /><stop offset="0.450" stopColor="#ee9a98" /><stop offset="0.500" stopColor="#e0575a" /><stop offset="1" stopColor="#d92f38" /></linearGradient>
        </defs>
        <rect width="36" height="36" fill="url(#acad)" />
        <path d="M18 5L7 30h6l5-5z" fill="#b3161f" />
        <path d="M18 5l11 25h-6l-5-5-6-1 6-3z" fill="#8c0f17" />
      </svg>
    ),
  },
  {
    name: 'Arduino',
    icon: (
      <svg width="34" height="34" viewBox="0 0 34 34" fill="none">
        <circle cx="17" cy="17" r="16.500" fill="#0b9a9f" />
        <path d="M17 17q-4-5-7.500-5a5 5 0 0 0 0 10q3.500 0 7.500-5t7.500-5a5 5 0 0 1 0 10q-3.500 0-7.500-5z" stroke="#fff" strokeWidth="2.600" />
        <path d="M7.500 17h4M22.500 17h4M24.500 15v4" stroke="#fff" strokeWidth="1.300" />
      </svg>
    ),
  },
  {
    name: 'Processing',
    icon: (
      <svg width="32" height="32" viewBox="0 0 32 32">
        <circle cx="16" cy="16" r="15" fill="#050505" stroke="#b9b9b9" strokeWidth="1.500" />
        <path d="M4 14l9-9 14 8M5 20l10 8 12-10" stroke="#554" fill="none" />
        <text x="8" y="22" fontSize="19" fill="#fff" fontFamily="Liberation Serif">p</text>
        <text x="17" y="17" fontSize="15" fill="#fff" fontFamily="Liberation Serif">3</text>
      </svg>
    ),
  },
  { name: 'Chrome', open: true, icon: <Chrome /> },
  {
    name: 'Brackets',
    open: true,
    icon: (
      <svg width="36" height="36" viewBox="0 0 36 36">
        <rect width="36" height="36" rx="2" fill="#1590d6" />
        <rect x="4" y="4" width="28" height="28" rx="2" fill="#fff" />
        <path d="M16 9H7v18h9v-4h-4V13h4zM20 9h9v18h-9v-4h4V13h-4z" fill="#474747" />
      </svg>
    ),
  },
  { name: 'Chrome 2', open: true, icon: <Chrome /> },
  {
    name: 'Cura',
    open: true,
    icon: (
      <svg width="36" height="36" viewBox="0 0 36 36">
        <path d="M10 0h26v27l-9 9H0V10z" fill="#0ea8e4" />
        <path d="M27 11h-8q-7 0-7 7t7 7h8" fill="none" stroke="#fff" strokeWidth="5" />
      </svg>
    ),
  },
  {
    name: 'Photos',
    open: true,
    icon: (
      <svg width="33" height="33" viewBox="0 0 33 33">
        <rect x="0.800" y="0.800" width="31.400" height="31.400" fill="none" stroke="#fff" strokeWidth="1.600" />
        <path d="M1 23L12 8l9 11 1-5 11 13v6H1z" fill="#fff" />
        <path d="M19 15l9 11" stroke="#050c14" strokeWidth="1.400" />
      </svg>
    ),
  },
  {
    name: 'Fusion 360',
    open: true,
    active: true,
    icon: (
      <svg width="36" height="36" viewBox="0 0 36 36">
        <rect width="36" height="36" fill="#fbe6d3" />
        <path d="M0 24l36-12v24H0z" fill="#f7d4b4" />
        <text x="10" y="23" fontSize="25" fontWeight="700" fill="#d47a22" fontFamily="Liberation Sans">F</text>
        <text x="18" y="35" fontSize="7" fontWeight="700" fill="#e08a3a" fontFamily="Liberation Sans">360</text>
      </svg>
    ),
  },
]

function Taskbar() {
  return (
    <footer className={`flex h-[60px] bg-[#050c14] text-white ${SYSTEM_FONT}`}>
      <button aria-label="Start" className="grid w-[72px] shrink-0 place-items-center">
        <svg width="24" height="24" viewBox="0 0 24 24" fill="#fff">
          <path d="M0 3.500L10 2v9.500H0zM11 1.800L24 0v11.500H11zM0 12.500h10V22L0 20.500zM11 12.500h13V24l-13-1.800z" />
        </svg>
      </button>
      <div className="flex w-[516px] shrink-0 items-center border-t border-[#bdbdbd] bg-[#f2f2f2] pr-[21px] pl-[13px]">
        <svg width="34" height="34" viewBox="0 0 34 34" aria-hidden="true"><circle cx="17" cy="17" r="14.500" fill="none" stroke="#000" strokeWidth="3.600" /></svg>
        <input type="text" aria-label="Search" placeholder="Type here to search" className="ml-[13px] min-w-0 flex-1 bg-transparent text-[20px] leading-6 text-black outline-none placeholder:text-[#2b2b2b]" />
        <button aria-label="Voice search">
          <svg width="18" height="26" viewBox="0 0 18 26" fill="none" stroke="#111" strokeWidth="1.600">
            <rect x="5" y="1" width="8" height="17" rx="2.500" />
            <path d="M1 12v5q0 4 4 4h8q4 0 4-4v-5M9 21v4M5 25h8" />
          </svg>
        </button>
      </div>
      <div className="flex pl-[5px]">
        {APPS.map(a => (
          <button key={a.name} aria-label={a.name} className={`relative grid w-[71px] place-items-center ${a.active ? 'bg-[#3b4048]' : ''}`}>
            {a.icon}
            {a.open && <span className={`absolute bottom-0 h-[3px] bg-[#76b9ed] ${a.active ? 'inset-x-0' : 'inset-x-[7px]'}`} />}
          </button>
        ))}
      </div>
      <div className="ml-auto flex items-center pr-[7px]">
        <button aria-label="People">
          <svg width="24" height="24" viewBox="0 0 24 24" fill="none" stroke="#fff" strokeWidth="1.800">
            <circle cx="16" cy="4.500" r="3.600" /><circle cx="7.500" cy="12.500" r="3.600" />
            <path d="M12 14q.5-4.500 4-5 5 .5 6 6M1.500 23q.5-6 6-6.500 5 .5 6 6.500" />
          </svg>
        </button>
        <button aria-label="Show hidden icons" className="ml-[33px]">
          <svg width="18" height="11" viewBox="0 0 18 11" fill="none"><path d="M.5 10L9 1l8.500 9" stroke="#fff" strokeWidth="1.500" /></svg>
        </button>
        <svg width="24" height="18" viewBox="0 0 24 18" className="ml-[15px]" fill="none" stroke="#fff" strokeWidth="1.300" aria-label="Battery">
          <path d="M2 0v3M6 0v3M.7 3.500h6.600v3q0 2-3.300 2T.7 6.500zM4 8.500V16h18V5H9" />
          <path d="M7 6.500h13v8H6V10l2.500-1z" fill="#fff" stroke="none" />
          <path d="M23 8.500v4" stroke="#fff" />
        </svg>
        <svg width="24" height="20" viewBox="0 0 24 20" className="ml-3" fill="none" stroke="#fff" strokeWidth="1.400" aria-label="Volume">
          <path d="M1 7h3.500L9.500 2v16l-5-5H1zM12.500 7q2 3 0 6M16 5q3.500 5 0 10M19.500 3q5 7 0 14" />
        </svg>
        <svg width="20" height="20" viewBox="0 0 20 20" className="ml-[14px]" fill="none" stroke="#fff" strokeWidth="1.300" aria-label="Wi-Fi">
          <path d="M1 19Q1 3 19 1.500M5.500 19Q6 7.500 19 6M10 19q1-7 9-8M14 19q.5-3.500 5-4" />
          <circle cx="17.500" cy="17.500" r="1.500" fill="#fff" stroke="none" />
        </svg>
        <button className="ml-[17px] text-[16px]">ENG</button>
        <time className="ml-5 flex flex-col items-center text-[18px] leading-7">
          <span>19:25</span>
          <span>26-02-2019</span>
        </time>
        <button aria-label="Notifications" className="ml-[27px]">
          <svg width="38" height="38" viewBox="0 0 38 38">
            <path d="M0 1h24v19H12l-3 5-3-5H0z" fill="#fff" />
            <path d="M5 6h14M5 10h14M5 14h9" stroke="#050c14" strokeWidth="1.300" />
            <circle cx="23.500" cy="25" r="11.500" fill="#2b2f34" stroke="#909396" strokeWidth="1.200" />
            <text x="23.500" y="31" textAnchor="middle" fontSize="16" fontWeight="600" fill="#fff">4</text>
          </svg>
        </button>
        <span className="ml-[17px] h-[60px] w-px bg-[#7b8087]" />
      </div>
    </footer>
  )
}

export default function App() {
  const [browserOpen, setBrowserOpen] = useState(true)
  const [commentsOpen, setCommentsOpen] = useState(false)

  return (
    <div className={`flex min-h-screen flex-col bg-white ${UI_FONT}`}>
      <Gradients />
      <TitleBar />
      <TabBar />
      <QuickBar />
      <main className="relative flex flex-1 flex-col">
        <Canvas />
        <Ribbon />
        <ViewCube />
        <aside className="relative mt-[6px]">
          <div className="ml-[6px]">
            <PanelBar title="BROWSER" open={browserOpen} onToggle={() => setBrowserOpen(!browserOpen)} />
          </div>
          {browserOpen && <BrowserTree />}
        </aside>
        <div className="relative mt-auto grid grid-cols-3 items-center pb-[6px]">
          <div className="ml-[6px]">
            <PanelBar title="COMMENTS" open={commentsOpen} onToggle={() => setCommentsOpen(!commentsOpen)} docked />
          </div>
          <div className="justify-self-center"><NavBar /></div>
        </div>
      </main>
      <Timeline />
      <Taskbar />
    </div>
  )
}
